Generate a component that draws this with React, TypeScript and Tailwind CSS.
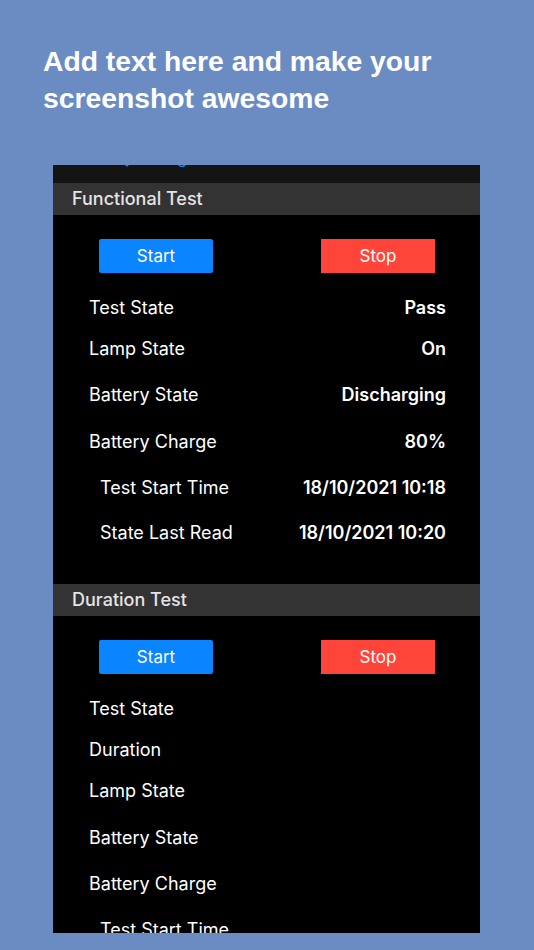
import React from "react";

type Row = { label: string; value?: string; h: string; indent?: boolean };

const functionalRows: Row[] = [
  { label: "Test State", value: "Pass", h: "h-[41px]" },
  { label: "Lamp State", value: "On", h: "h-[46px]" },
  { label: "Battery State", value: "Discharging", h: "h-[47px]" },
  { label: "Battery Charge", value: "80%", h: "h-[46px]" },
  { label: "Test Start Time", value: "18/10/2021 10:18", h: "h-[45px]", indent: true },
  { label: "State Last Read", value: "18/10/2021 10:20", h: "h-[71px]", indent: true },
];

const durationRows: Row[] = [
  { label: "Test State", h: "h-[41px]" },
  { label: "Duration", h: "h-[41px]" },
  { label: "Lamp State", h: "h-[47px]" },
  { label: "Battery State", h: "h-[46px]" },
  { label: "Battery Charge", h: "h-[46px]" },
  { label: "Test Start Time", h: "h-[46px]", indent: true },
];

function Header({ title }: { title: string }) {
  return (
    <div className="h-[32px] shrink-0 bg-[#333333] flex items-center pl-[19px] text-[18px] font-medium text-[#e4e4e6] leading-none">
      {title}
    </div>
  );
}

function Buttons() {
  return (
    <div className="shrink-0 pt-[24px] pl-[46px] pr-[45px] flex justify-between">
      <button className="w-[114px] h-[34px] bg-[#0a84ff] rounded-[2px] text-white text-[17px] leading-none flex items-center justify-center">
        Start
      </button>
      <button className="w-[114px] h-[34px] bg-[#ff453a] text-white text-[17px] leading-none flex items-center justify-center">
        Stop
      </button>
    </div>
  );
}

function Rows({ rows }: { rows: Row[] }) {
  return (
    <div className="shrink-0 mt-[15px] flex flex-col">
      {rows.map((r, i) => (
        <div
          key={i}
          className={`${r.h} shrink-0 flex justify-between items-start pt-[8px] pr-[34px] ${
            r.indent ? "pl-[47px]" : "pl-[36px]"
          }`}
        >
          <span className="text-[18px] leading-[24px] text-white">{r.label}</span>
          {r.value && (
            <span className="text-[18px] leading-[24px] font-semibold text-white">{r.value}</span>
          )}
        </div>
      ))}
    </div>
  );
}

export default function App() {
  return (
    <div className="w-[534px] h-[950px] bg-[#6b8bc3] overflow-hidden flex flex-col">
      <h1
        className="shrink-0 pt-[43px] pl-[43px] text-white font-bold text-[28.3px] leading-[37px]"
        style={{ fontFamily: '"Liberation Sans", Arial, sans-serif' }}
      >
        Add text here and make your
        <br />
        screenshot awesome
      </h1>
      <div
        className="mt-[48px] ml-[53px] w-[427px] h-[768px] shrink-0 bg-black overflow-hidden flex flex-col"
        style={{ fontFamily: 'Inter, "Noto Sans", sans-serif' }}
      >
        <div className="h-[18px] shrink-0 bg-[#141414] overflow-hidden">
          <div className="h-[44px] -mt-[26px] flex items-end pb-[16px] pl-[63px] gap-[5px] text-[#0a84ff]">
            <svg width="13" height="22" viewBox="0 0 13 22" fill="none" className="shrink-0">
              <path d="M11 2 L2 11 L11 20" stroke="#0a84ff" strokeWidth="3" strokeLinecap="round" strokeLinejoin="round" />
            </svg>
            <span className="text-[17px] leading-[20px]">Config</span>
          </div>
        </div>
        <Header title="Functional Test" />
        <Buttons />
        <Rows rows={functionalRows} />
        <Header title="Duration Test" />
        <Buttons />
        <Rows rows={durationRows} />
      </div>
    </div>
  );
}
